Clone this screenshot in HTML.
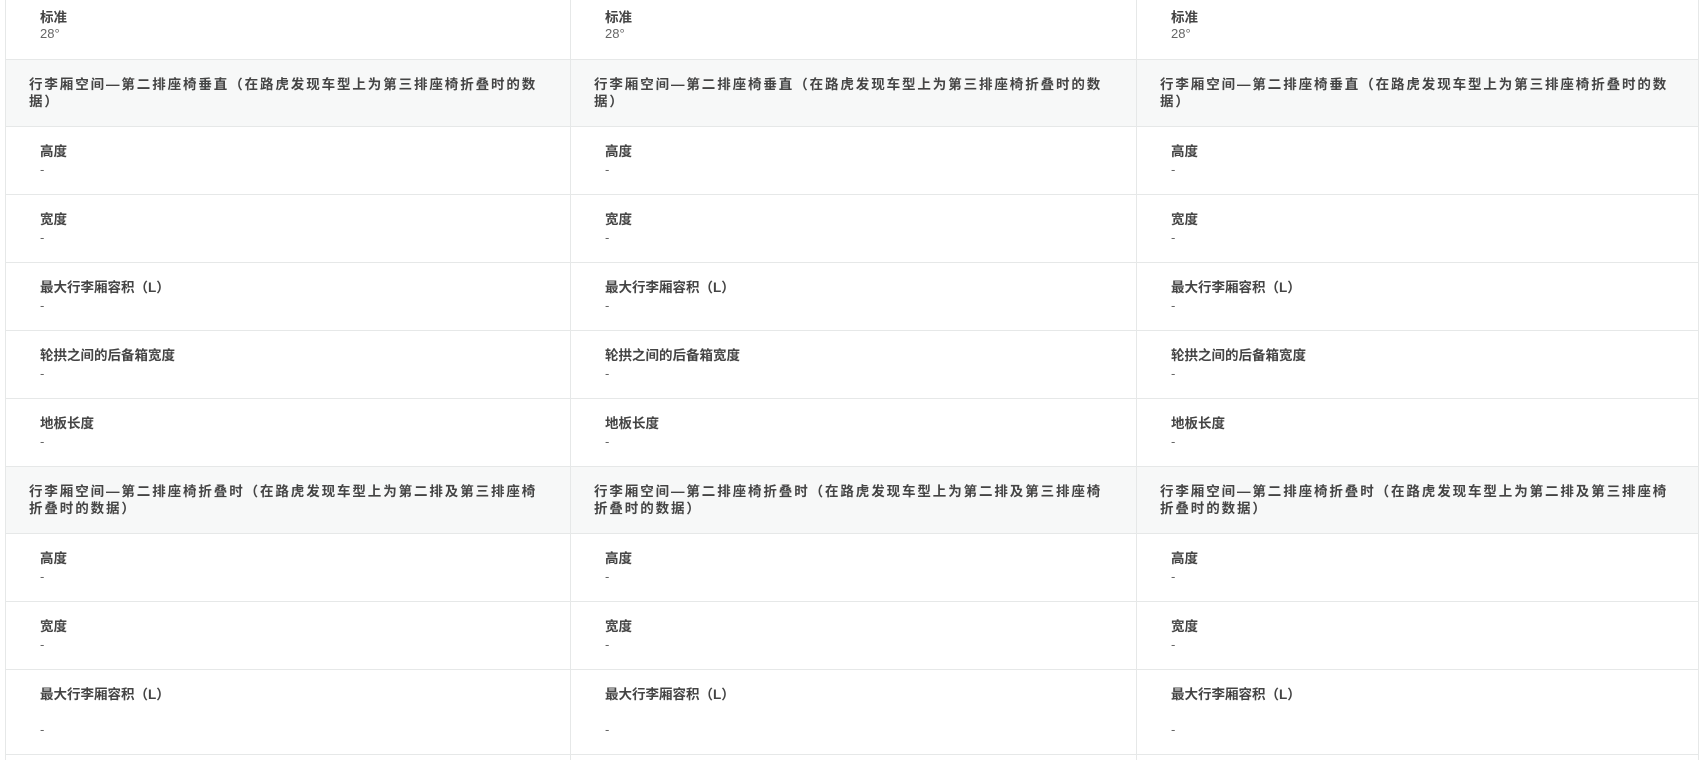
<!DOCTYPE html><html><head><meta charset="utf-8"><style>
html,body{margin:0;width:1704px;height:760px;overflow:hidden;background:#fff;font-family:"Liberation Sans","Noto Sans CJK SC",sans-serif;position:relative}
.r{position:absolute;left:5px;width:1694px;border-left:1px solid #e6e8e8;border-right:1px solid #e6e8e8;border-bottom:1px solid #e6e8e8;box-sizing:border-box;display:flex}
.c{flex:0 0 auto;box-sizing:border-box;position:relative;height:100%}
.c+.c{border-left:1px solid #e6e8e8}
.c1{width:564px}.c2{width:566px}.c3{width:562px}
.h{background:#f7f8f8}
.h .c{padding:16px 0 0 23px;font-size:13.5px;font-weight:bold;color:#444;line-height:17px;letter-spacing:1.9px}
.l{position:absolute;left:34px;top:13px;font-size:13.5px;font-weight:bold;color:#444}
.v{position:absolute;left:34px;top:35px;font-size:13px;color:#666}
</style></head><body>
<div class="r" style="top:0;height:60px"><div class="c c1"><div class="l" style="top:6px">标准</div><div class="v" style="top:26px">28°</div></div><div class="c c2"><div class="l" style="top:6px">标准</div><div class="v" style="top:26px">28°</div></div><div class="c c3"><div class="l" style="top:6px">标准</div><div class="v" style="top:26px">28°</div></div></div>
<div class="r h" style="top:60px;height:67px"><div class="c c1">行李厢空间—第二排座椅垂直（在路虎发现车型上为第三排座椅折叠时的数<br>据）</div><div class="c c2">行李厢空间—第二排座椅垂直（在路虎发现车型上为第三排座椅折叠时的数<br>据）</div><div class="c c3">行李厢空间—第二排座椅垂直（在路虎发现车型上为第三排座椅折叠时的数<br>据）</div></div>
<div class="r" style="top:127px;height:68px"><div class="c c1"><div class="l">高度</div><div class="v">-</div></div><div class="c c2"><div class="l">高度</div><div class="v">-</div></div><div class="c c3"><div class="l">高度</div><div class="v">-</div></div></div>
<div class="r" style="top:195px;height:68px"><div class="c c1"><div class="l">宽度</div><div class="v">-</div></div><div class="c c2"><div class="l">宽度</div><div class="v">-</div></div><div class="c c3"><div class="l">宽度</div><div class="v">-</div></div></div>
<div class="r" style="top:263px;height:68px"><div class="c c1"><div class="l">最大行李厢容积（L）</div><div class="v">-</div></div><div class="c c2"><div class="l">最大行李厢容积（L）</div><div class="v">-</div></div><div class="c c3"><div class="l">最大行李厢容积（L）</div><div class="v">-</div></div></div>
<div class="r" style="top:331px;height:68px"><div class="c c1"><div class="l">轮拱之间的后备箱宽度</div><div class="v">-</div></div><div class="c c2"><div class="l">轮拱之间的后备箱宽度</div><div class="v">-</div></div><div class="c c3"><div class="l">轮拱之间的后备箱宽度</div><div class="v">-</div></div></div>
<div class="r" style="top:399px;height:68px"><div class="c c1"><div class="l">地板长度</div><div class="v">-</div></div><div class="c c2"><div class="l">地板长度</div><div class="v">-</div></div><div class="c c3"><div class="l">地板长度</div><div class="v">-</div></div></div>
<div class="r h" style="top:467px;height:67px"><div class="c c1">行李厢空间—第二排座椅折叠时（在路虎发现车型上为第二排及第三排座椅<br>折叠时的数据）</div><div class="c c2">行李厢空间—第二排座椅折叠时（在路虎发现车型上为第二排及第三排座椅<br>折叠时的数据）</div><div class="c c3">行李厢空间—第二排座椅折叠时（在路虎发现车型上为第二排及第三排座椅<br>折叠时的数据）</div></div>
<div class="r" style="top:534px;height:68px"><div class="c c1"><div class="l">高度</div><div class="v">-</div></div><div class="c c2"><div class="l">高度</div><div class="v">-</div></div><div class="c c3"><div class="l">高度</div><div class="v">-</div></div></div>
<div class="r" style="top:602px;height:68px"><div class="c c1"><div class="l">宽度</div><div class="v">-</div></div><div class="c c2"><div class="l">宽度</div><div class="v">-</div></div><div class="c c3"><div class="l">宽度</div><div class="v">-</div></div></div>
<div class="r" style="top:670px;height:85px"><div class="c c1"><div class="l">最大行李厢容积（L）</div><div class="v" style="top:52px">-</div></div><div class="c c2"><div class="l">最大行李厢容积（L）</div><div class="v" style="top:52px">-</div></div><div class="c c3"><div class="l">最大行李厢容积（L）</div><div class="v" style="top:52px">-</div></div></div>
<div class="r" style="top:755px;height:5px;border-bottom:none"><div class="c c1"></div><div class="c c2"></div><div class="c c3"></div></div>
</body></html>
